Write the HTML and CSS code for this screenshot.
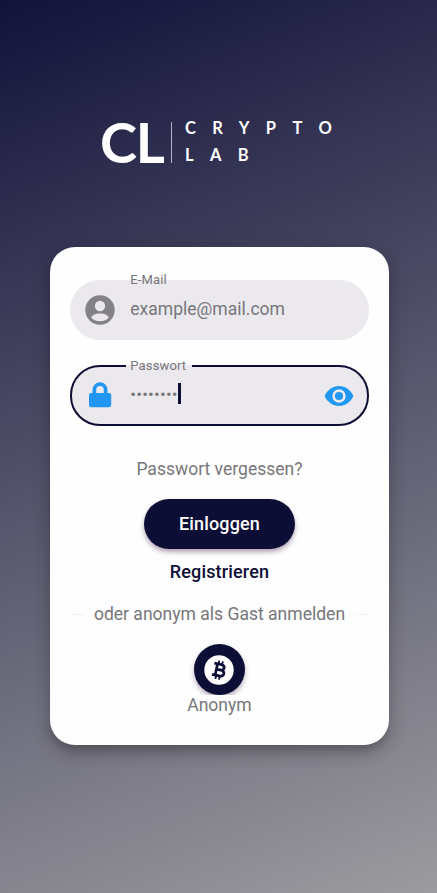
FILE: index.html
```html
<!DOCTYPE html>
<html lang="de">
<head>
<meta charset="utf-8">
<meta name="viewport" content="width=device-width, initial-scale=1">
<title>Crypto Lab</title>
<link rel="stylesheet" href="styles.css">
</head>
<body>
<header class="logo">
  <span class="logo-mark">CL</span>
  <span class="logo-rule"></span>
  <span class="logo-name"><span>CRYPTO</span><span>LAB</span></span>
</header>
<main class="card">
  <div class="field">
    <span class="field-label">E-Mail</span>
    <svg class="icon" viewBox="0 0 36 36"><circle cx="18" cy="18" r="14.7" fill="#848287"/><circle cx="18" cy="14" r="5.2" fill="#ebe9ee"/><path d="M9.2 25.8C9.8 22.7 14.3 21.4 18 21.4S26.2 22.7 26.8 25.8C24.8 28.2 21.7 29.2 18 29.2S11.2 28.2 9.2 25.8Z" fill="#ebe9ee"/></svg>
    <span class="value">example@mail.com</span>
  </div>
  <div class="field focused">
    <span class="field-label">Passwort</span>
    <svg class="icon" viewBox="0 0 36 36"><path d="M12.4 16.5V11.8a5.6 5.6 0 0 1 11.2 0v4.7" fill="none" stroke="#2196f3" stroke-width="3.7"/><rect x="7" y="15" width="22.2" height="14.2" rx="2.2" fill="#2196f3"/></svg>
    <span class="value password">••••••••</span><span class="caret"></span>
    <svg class="icon eye" viewBox="0 0 36 36"><path d="M3.6 18C6.4 11.9 11.7 8 18 8s11.6 3.9 14.4 10C29.6 24.1 24.3 28 18 28S6.4 24.1 3.6 18Z" fill="#2196f3"/><circle cx="18" cy="18" r="5.4" fill="#2196f3" stroke="#ebe9ee" stroke-width="2.6"/></svg>
  </div>
  <a class="forgot">Passwort vergessen?</a>
  <button class="login">Einloggen</button>
  <a class="register">Registrieren</a>
  <div class="divider"><span>oder anonym als Gast anmelden</span></div>
  <div class="guest">
    <div class="guest-clip"><button class="coin" aria-label="Anonym">
      <svg viewBox="0 0 30 30"><circle cx="15" cy="15" r="14.7" fill="#fff"/><g transform="rotate(12 15 15)" fill="none" stroke="#0d0e35"><path d="M9 9.2h6.7c5.2 0 5.2 5.5 0 5.5h-3.5M9 20.7h7.4c5.5 0 5.5-6 0-6M12.3 9.2v11.5" stroke-width="2.7"/><path d="M13.3 5.8v3M17 5.8v3M13.3 21v3.4M17 21v3.4" stroke-width="1.9"/></g></svg>
    </button></div>
    <span>Anonym</span>
  </div>
</main>
</body>
</html>
```
FILE: styles.css
```css
* { box-sizing: border-box; }
body {
  margin: 0;
  height: 893px;
  overflow: hidden;
  display: flex;
  flex-direction: column;
  background: linear-gradient(159deg, #12123b, #9c9b9f);
  font-family: Roboto, sans-serif;
  font-size: 17.55px;
  color: #77767a;
}
button { border: 0; padding: 0; font: inherit; }
.logo {
  height: 247px;
  flex: none;
  display: flex;
  align-items: flex-start;
  padding: 122px 0 0 100px;
  color: #fff;
  font-family: Lato, sans-serif;
  font-weight: 700;
}
.logo-mark { width: 71px; margin-top: -1px; font-size: 56px; line-height: 42px; letter-spacing: -1.2px; }
.logo-rule { width: 1px; height: 41px; background: #b5b4cc; }
.logo-name { display: flex; flex-direction: column; margin: -7px 0 0 13px; font-size: 16.5px; line-height: 27px; letter-spacing: 16.4px; }
.card {
  width: 338.4px;
  height: 497.5px;
  flex: none;
  margin: 0 0 0 50.3px;
  padding: 33px 20px 0;
  display: flex;
  flex-direction: column;
  align-items: center;
  background: #fefefe;
  border-radius: 25px;
  box-shadow: 0 7px 10px -3px rgba(0,0,0,.18), 0 10px 17px rgba(0,0,0,.12), 0 4px 22px rgba(0,0,0,.1);
}
.field {
  position: relative;
  width: 100%;
  height: 60px;
  flex: none;
  display: flex;
  align-items: center;
  padding: 0 12px;
  background: #ebe9ee;
  border-radius: 30px;
  margin-bottom: 25px;
}
.focused { height: 61px; border: 2px solid #0d0e35; padding: 0 10px; margin-bottom: 0; }
.field-label { position: absolute; left: 60px; top: -8px; font-size: 13px; line-height: 15px; letter-spacing: .15px; }
.focused .field-label {
  left: 54px;
  top: -9px;
  padding: 0 6px 0 4px;
  background: linear-gradient(#fefefe 7px, #ebe9ee 7px);
}
.icon { width: 36px; height: 36px; flex: none; }
.value { margin-left: 12px; line-height: 24px; position: relative; top: -1px; }
.password { top: -2px; font-size: 17px; letter-spacing: .2px; }
.caret { width: 3px; height: 21px; background: #0d0e35; position: relative; top: -2px; }
.eye { margin-left: auto; }
.forgot { margin-top: 32px; line-height: 22px; }
.login {
  width: 151px;
  height: 50px;
  margin-top: 18.5px;
  padding-bottom: 1px;
  flex: none;
  border-radius: 25px;
  background: #0d0e35;
  color: #fff;
  font-size: 18px;
  font-weight: 500;
  letter-spacing: .15px;
  box-shadow: 0 3px 5px rgba(60,20,70,.4);
}
.register { margin-top: 12.5px; line-height: 22px; font-size: 18px; font-weight: 500; letter-spacing: .15px; color: #0d0e35; }
.divider { width: 100%; display: flex; align-items: center; gap: 10px; margin-top: 20px; line-height: 22px; white-space: nowrap; }
.divider::before, .divider::after { content: ""; flex: 1; height: 1px; background: #f2f2f2; }
.guest { display: flex; flex-direction: column; align-items: center; margin-top: 19px; line-height: 20px; }
.guest-clip { padding: 0 10px; height: 50.5px; overflow: hidden; }
.coin { width: 51px; height: 51px; border-radius: 50%; background: #0d0e35; display: grid; place-items: center; box-shadow: 0 3px 5px rgba(60,20,70,.35); }
.coin svg { width: 30px; height: 30px; margin-top: 1.5px; }
```
